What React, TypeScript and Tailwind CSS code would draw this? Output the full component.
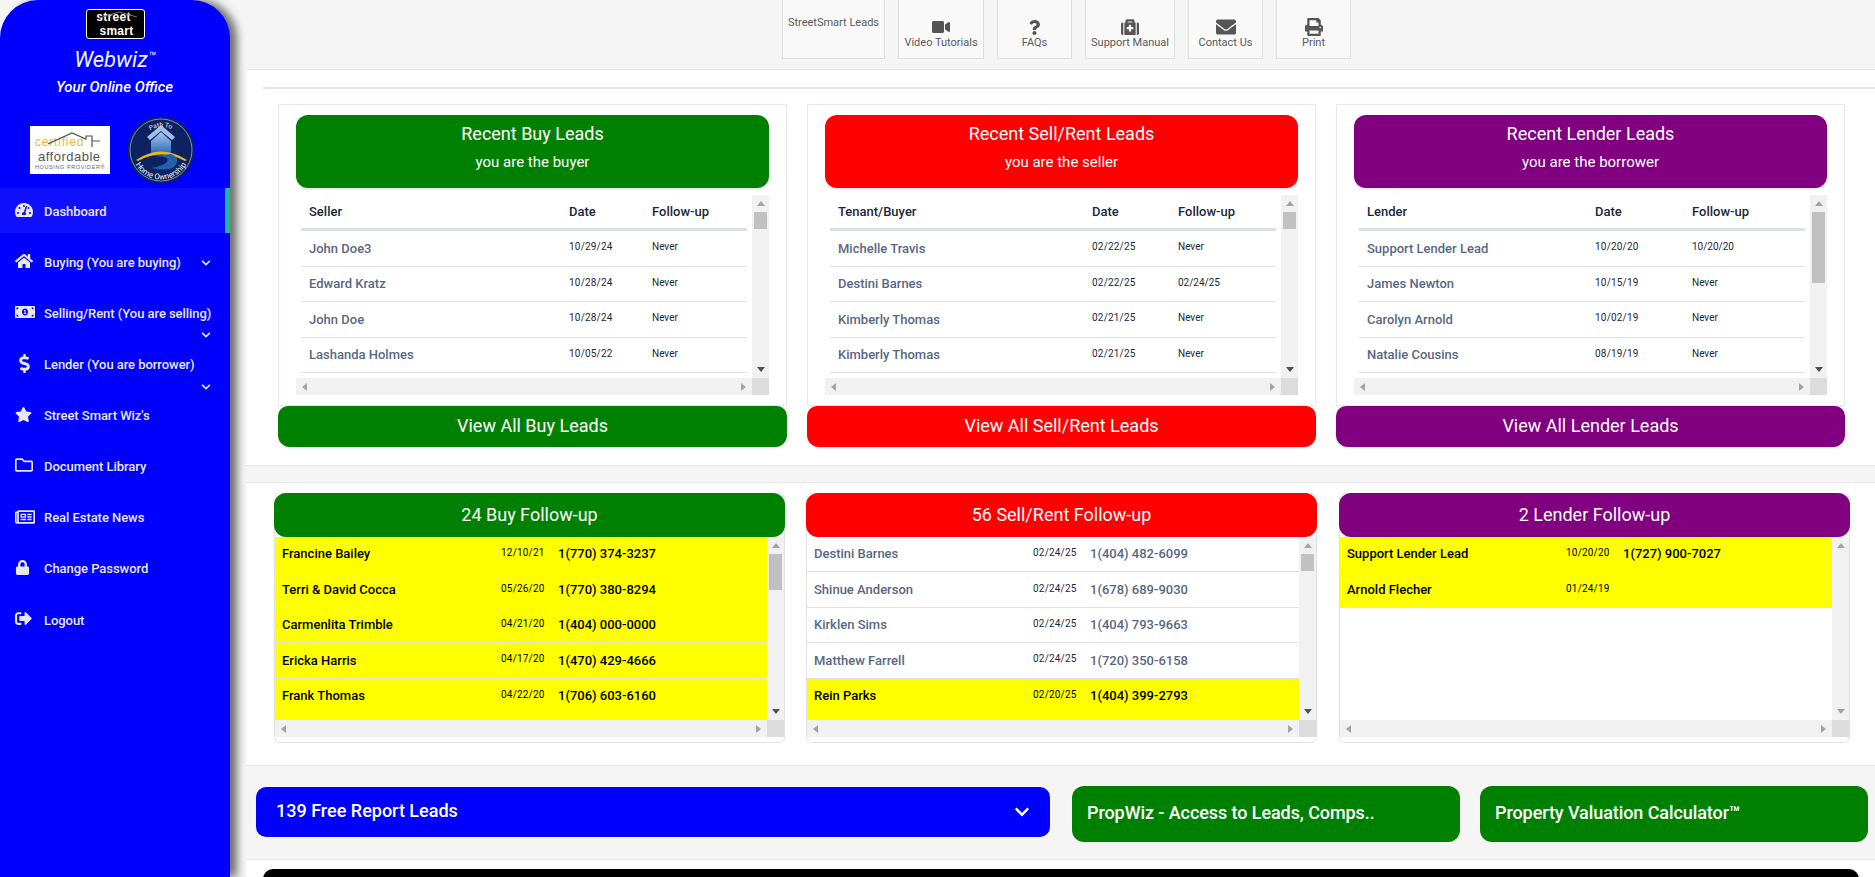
import React from "react";
import {
  FaChevronDown,
  FaDollarSign,
  FaEnvelope,
  FaHome,
  FaLock,
  FaMedkit,
  FaMoneyBillAlt,
  FaPrint,
  FaQuestion,
  FaRegFolder,
  FaRegNewspaper,
  FaSignOutAlt,
  FaStar,
  FaTachometerAlt,
  FaVideo,
} from "react-icons/fa";

const GREEN = "bg-[#008000]";
const RED = "bg-[#ff0000]";
const PURPLE = "bg-[#800080]";

const navItems = [
  { label: "Dashboard", icon: <FaTachometerAlt size={18} />, active: true },
  { label: "Buying (You are buying)", icon: <FaHome size={18} />, chevron: "top-[19px]" },
  { label: "Selling/Rent (You are selling)", icon: <FaMoneyBillAlt size={20} />, chevron: "top-[40px]" },
  { label: "Lender (You are borrower)", icon: <FaDollarSign size={19} />, chevron: "top-[41px]" },
  { label: "Street Smart Wiz's", icon: <FaStar size={17} /> },
  { label: "Document Library", icon: <FaRegFolder size={18} /> },
  { label: "Real Estate News", icon: <FaRegNewspaper size={20} /> },
  { label: "Change Password", icon: <FaLock size={15} /> },
  { label: "Logout", icon: <FaSignOutAlt size={17} /> },
];

const topButtons = [
  { label: "Video Tutorials", icon: <FaVideo size={18} />, w: "w-[86px]" },
  { label: "FAQs", icon: <FaQuestion size={15} />, w: "w-[75px]" },
  { label: "Support Manual", icon: <FaMedkit size={18} />, w: "w-[90px]" },
  { label: "Contact Us", icon: <FaEnvelope size={20} />, w: "w-[75px]" },
  { label: "Print", icon: <FaPrint size={18} />, w: "w-[75px]" },
];

const recentCards = [
  {
    color: GREEN,
    title: "Recent Buy Leads",
    sub: "you are the buyer",
    head: "Seller",
    button: "View All Buy Leads",
    nameCol: "w-[260px]",
    dateCol: "w-[83px]",
    thumb: "h-[17px]",
    rows: [
      ["John Doe3", "10/29/24", "Never"],
      ["Edward Kratz", "10/28/24", "Never"],
      ["John Doe", "10/28/24", "Never"],
      ["Lashanda Holmes", "10/05/22", "Never"],
    ],
  },
  {
    color: RED,
    title: "Recent Sell/Rent Leads",
    sub: "you are the seller",
    head: "Tenant/Buyer",
    button: "View All Sell/Rent Leads",
    nameCol: "w-[254px]",
    dateCol: "w-[86px]",
    thumb: "h-[17px]",
    rows: [
      ["Michelle Travis", "02/22/25", "Never"],
      ["Destini Barnes", "02/22/25", "02/24/25"],
      ["Kimberly Thomas", "02/21/25", "Never"],
      ["Kimberly Thomas", "02/21/25", "Never"],
    ],
  },
  {
    color: PURPLE,
    title: "Recent Lender Leads",
    sub: "you are the borrower",
    head: "Lender",
    button: "View All Lender Leads",
    nameCol: "w-[228px]",
    dateCol: "w-[97px]",
    thumb: "h-[71px]",
    rows: [
      ["Support Lender Lead", "10/20/20", "10/20/20"],
      ["James Newton", "10/15/19", "Never"],
      ["Carolyn Arnold", "10/02/19", "Never"],
      ["Natalie Cousins", "08/19/19", "Never"],
    ],
  },
];

const followUps = [
  {
    color: GREEN,
    title: "24 Buy Follow-up",
    thumb: "h-[36px]",
    filler: true,
    offset: "",
    rows: [
      { name: "Francine Bailey", date: "12/10/21", phone: "1(770) 374-3237", hot: true },
      { name: "Terri & David Cocca", date: "05/26/20", phone: "1(770) 380-8294", hot: true },
      { name: "Carmenlita Trimble", date: "04/21/20", phone: "1(404) 000-0000", hot: true },
      { name: "Ericka Harris", date: "04/17/20", phone: "1(470) 429-4666", hot: true },
      { name: "Frank Thomas", date: "04/22/20", phone: "1(706) 603-6160", hot: true },
    ],
  },
  {
    color: RED,
    title: "56 Sell/Rent Follow-up",
    thumb: "h-[17px]",
    filler: true,
    offset: "",
    rows: [
      { name: "Destini Barnes", date: "02/24/25", phone: "1(404) 482-6099" },
      { name: "Shinue Anderson", date: "02/24/25", phone: "1(678) 689-9030" },
      { name: "Kirklen Sims", date: "02/24/25", phone: "1(404) 793-9663" },
      { name: "Matthew Farrell", date: "02/24/25", phone: "1(720) 350-6158" },
      { name: "Rein Parks", date: "02/20/25", phone: "1(404) 399-2793", hot: true },
    ],
  },
  {
    color: PURPLE,
    title: "2 Lender Follow-up",
    thumb: "",
    filler: false,
    offset: "ml-[1px]",
    rows: [
      { name: "Support Lender Lead", date: "10/20/20", phone: "1(727) 900-7027", hot: true },
      { name: "Arnold Flecher", date: "01/24/19", phone: "", hot: true },
    ],
  },
];

// little triangle used on the scrollbar buttons
const Arrow = ({ dir, light }: { dir: "up" | "down" | "left" | "right"; light?: boolean }) => {
  const points = {
    up: "0,6 4,1 8,6",
    down: "0,1 8,1 4,6",
    left: "6,0 6,8 1,4",
    right: "2,0 2,8 7,4",
  };
  return (
    <svg width="8" height="8" viewBox="0 0 8 8" className={light ? "fill-[#a3a3a3]" : dir === "down" ? "fill-[#505050]" : "fill-[#a3a3a3]"}>
      <polygon points={points[dir]} />
    </svg>
  );
};

const VScroll = ({ thumb }: { thumb: string }) => (
  <div className="flex w-[17px] shrink-0 flex-col items-center bg-[#f1f1f1]">
    <div className="flex h-[17px] w-full items-center justify-center">
      <Arrow dir="up" />
    </div>
    <div className="w-full flex-1 px-[2px]">
      {thumb && <div className={`w-full bg-[#c1c1c1] ${thumb}`} />}
    </div>
    <div className="flex h-[17px] w-full items-center justify-center">
      <Arrow dir="down" light={!thumb} />
    </div>
  </div>
);

const HScroll = () => (
  <div className="flex h-[17px] shrink-0">
    <div className="flex flex-1 items-center justify-between bg-[#f1f1f1] px-[5px]">
      <Arrow dir="left" />
      <Arrow dir="right" />
    </div>
    <div className="w-[17px] bg-[#dcdcdc]" />
  </div>
);

const StreetSmartLogo = () => (
  <div className="relative flex h-[30px] w-[59px] flex-col items-center justify-end rounded-[3px] border border-white bg-black [font-family:'Liberation_Sans',sans-serif] text-[12px] leading-[14px] font-bold tracking-[0.3px] text-white">
    <svg width="40" height="8" viewBox="0 0 40 8" className="absolute top-[1px] left-[12px] fill-none stroke-[#777]">
      <path d="M0 7 L20 1 L38 6" />
    </svg>
    <span className="ml-[-3px]">street</span>
    <span className="ml-[3px]">smart</span>
  </div>
);

const CertifiedLogo = () => (
  <div className="relative flex h-[48px] w-[80px] shrink-0 flex-col justify-end bg-white pb-[3px] pl-[5px] [font-family:'Liberation_Sans',sans-serif]">
    <svg width="54" height="18" viewBox="0 0 54 16" className="absolute top-[5px] left-[18px] fill-none stroke-[#555] stroke-[1.2]">
      <path d="M0 12 L24 1 L38 7 L38 4 L44 4 L44 9 L52 9 M44 9 L44 15" />
    </svg>
    <span className="text-[12px] leading-[14px] tracking-[0.8px] text-[#e9b93a]">certified</span>
    <span className="ml-[3px] text-[13px] leading-[15px] tracking-[0.5px] text-[#555]">affordable</span>
    <span className="text-[5.5px] leading-[7px] tracking-[0.6px] whitespace-nowrap text-[#666]">HOUSING PROVIDER®</span>
  </div>
);

const PathLogo = () => (
  <svg width="68" height="68" viewBox="0 0 68 68" className="shrink-0">
    <defs>
      <path id="arcTop" d="M18 19 A22 22 0 0 1 52 19" />
      <path id="arcBottom" d="M6 42 A29 29 0 0 0 62 42" />
      <linearGradient id="houseFill" x1="0" y1="0" x2="0" y2="1">
        <stop offset="0" stopColor="#a9c8ee" />
        <stop offset="1" stopColor="#2f6db8" />
      </linearGradient>
    </defs>
    <circle cx="34" cy="34" r="33.5" fill="#0d2260" />
    <circle cx="34" cy="34" r="31" fill="none" stroke="#c9d4ea" strokeWidth="0.6" />
    <path d="M20 21 L34 9 L48 21 L45 24 L34 15 L23 24 Z" fill="#9fc0ea" />
    <path d="M24 25 L34 16 L44 25 V37 H24 Z" fill="url(#houseFill)" />
    <path d="M9 44 Q34 27 60 44 L58 45 Q34 32 11 45 Z" fill="#e8b820" />
    <path d="M26 40 Q44 40 40 46 Q36 50 24 52 Q42 56 48 50 Q54 42 44 38 Z" fill="#2560ac" />
    <text fontSize="6.5" fill="#e6ecf8" fontFamily="Roboto, sans-serif">
      <textPath href="#arcTop" startOffset="7">Path To</textPath>
    </text>
    <text fontSize="8" fill="#e6ecf8" fontFamily="Roboto, sans-serif">
      <textPath href="#arcBottom" startOffset="7">Home Ownership</textPath>
    </text>
  </svg>
);

const Sidebar = () => (
  <aside className="z-10 flex h-full w-[230px] shrink-0 flex-col rounded-t-[38px] bg-[#0000ff] shadow-[7px_0_8px_rgba(0,0,0,0.55)]">
    <div className="flex justify-center pt-[9px]">
      <StreetSmartLogo />
    </div>
    <div className="mt-[7px] text-center text-[22px] leading-[28px] font-normal text-[#f0f0ff] italic">
      Webwiz<sup className="text-[13px]">™</sup>
    </div>
    <div className="mt-[3px] pr-[1px] text-center text-[15px] leading-[20px] font-medium text-white italic">Your Online Office</div>
    <div className="mt-[18px] flex h-[70px] items-center gap-[17px] pl-[30px]">
      <CertifiedLogo />
      <PathLogo />
    </div>
    <nav className="mt-[3px] flex flex-col gap-[6.1px]">
      {navItems.map((item) => (
        <div
          key={item.label}
          className={`relative flex h-[45px] items-center pt-[2px] pl-[15px] text-[13px] font-medium text-[#e7e7e7] ${
            item.active ? "border-r-[5px] border-[#1abb9c] bg-[#1010ff]" : ""
          }`}
        >
          <span className="-mt-[3px] flex w-[29px] shrink-0 items-center">{item.icon}</span>
          <span className="tracking-[-0.05px] whitespace-nowrap">{item.label}</span>
          {item.chevron && <FaChevronDown size={10} className={`absolute left-[201px] ${item.chevron}`} />}
        </div>
      ))}
    </nav>
  </aside>
);

const TopBar = () => (
  <div className="flex h-[70px] shrink-0 gap-[13px] border-b border-[#e6e6e6] pl-[536px] text-[11px] text-[#5a5a5a]">
    <div className="flex h-[59px] w-[103px] justify-center border border-t-0 border-[#dedede] bg-[#f9f9f9] pt-[15px]">StreetSmart Leads</div>
    {topButtons.map((b) => (
      <div
        key={b.label}
        className={`flex h-[59px] flex-col items-center border border-t-0 border-[#dedede] bg-[#f9f9f9] pt-[17px] ${b.w}`}
      >
        <span className="flex h-[20px] items-center text-[#555]">{b.icon}</span>
        <span className="mt-[-2px] leading-[16px] whitespace-nowrap">{b.label}</span>
      </div>
    ))}
  </div>
);

const RecentCard = ({ card }: { card: (typeof recentCards)[number] }) => (
  <div className="flex w-[509px] flex-col">
    <div className="h-[302px] border border-[#e6e9ef] bg-white px-[17px] pt-[10px]">
      <div className={`h-[73px] rounded-[12px] pt-[7px] text-center text-white shadow-[0_2px_2px_rgba(0,0,0,0.08)] ${card.color}`}>
        <div className="text-[18px] leading-[24px]">{card.title}</div>
        <div className="mt-[6px] text-[15px] leading-[20px]">{card.sub}</div>
      </div>
      <div className="mt-[7px] flex h-[200px] flex-col">
        <div className="flex h-[183px]">
          <div className="flex-1 overflow-hidden pr-[5px] pl-[5px]">
            <div className="flex h-[36px] items-center border-b-[3px] border-[#dcdfe3] pt-[1px] pl-[8px] text-[13px] font-medium text-[#1c273c]">
              <span className={`shrink-0 ${card.nameCol}`}>{card.head}</span>
              <span className={`shrink-0 ${card.dateCol}`}>Date</span>
              <span>Follow-up</span>
            </div>
            {card.rows.map((r, i) => (
              <div key={i} className="flex h-[35.5px] items-center border-b border-[#dee2e6] pl-[8px]">
                <span className={`shrink-0 text-[13px] font-medium text-[#596882] ${card.nameCol}`}>{r[0]}</span>
                <span className={`mb-[3px] shrink-0 text-[10px] tracking-[0.2px] text-[#1c273c] ${card.dateCol}`}>{r[1]}</span>
                <span className="mb-[3px] text-[10px] text-[#1c273c]">{r[2]}</span>
              </div>
            ))}
          </div>
          <VScroll thumb={card.thumb} />
        </div>
        <HScroll />
      </div>
    </div>
    <div className={`flex h-[41px] items-center justify-center rounded-b-[12px] rounded-t-[10px] pb-[2px] text-[18px] text-white shadow-[0_1px_2px_rgba(0,0,0,0.1)] ${card.color}`}>
      {card.button}
    </div>
  </div>
);

const FollowCard = ({ card }: { card: (typeof followUps)[number] }) => (
  <div className={`flex h-[250px] w-[511px] shrink-0 flex-col rounded-[6px] border border-[#e2e2e2] bg-white ${card.offset}`}>
    <div className={`-mx-px -mt-px flex h-[44px] shrink-0 items-center justify-center rounded-[12px] pb-[1px] text-[18px] text-white ${card.color}`}>{card.title}</div>
    <div className="flex h-[183px] shrink-0">
      <div className="flex-1 overflow-hidden">
        {card.rows.map((r) => (
          <div
            key={r.name}
            className={`flex h-[35.4px] items-center border-b border-[#dee2e6] pl-[7px] font-medium ${
              r.hot ? "bg-[#ffff00] text-black" : "text-[#596882]"
            }`}
          >
            <span className="w-[219px] shrink-0 text-[13px]">{r.name}</span>
            <span className={`mb-[3px] w-[57px] shrink-0 text-[10px] font-normal tracking-[0.2px] ${r.hot ? "text-black" : "text-[#1c273c]"}`}>{r.date}</span>
            <span className="text-[13px]">{r.phone}</span>
          </div>
        ))}
        {card.filler && <div className="h-[20px] bg-[#ffff00]" />}
      </div>
      <VScroll thumb={card.thumb} />
    </div>
    <HScroll />
  </div>
);

export default function App() {
  return (
    <div className="flex h-[877px] overflow-hidden bg-[#f5f5f5] [font-family:Roboto,sans-serif]">
      <Sidebar />
      <main className="flex min-w-0 flex-1 flex-col pl-[16px]">
        <TopBar />

        <section className="h-[396px] shrink-0 border-b border-[#e9e9e9] bg-white pt-[17px]">
          <div className="ml-[17px] h-[2px] bg-[#e3e7ed]" />
          <div className="mt-[15px] flex gap-[20px] pl-[32px]">
            {recentCards.map((c) => (
              <RecentCard key={c.title} card={c} />
            ))}
          </div>
        </section>

        <div className="h-[16px] shrink-0" />

        <section className="flex h-[284px] shrink-0 gap-[21px] border-y border-[#e9e9e9] bg-white pt-[10px] pl-[28px]">
          {followUps.map((c) => (
            <FollowCard key={c.title} card={c} />
          ))}
        </section>

        <section className="flex h-[93px] shrink-0 items-start pt-[20px] pl-[10px] text-[18px] font-medium text-white">
          <div className="mt-[1px] flex h-[50px] w-[794px] items-center justify-between rounded-[10px] bg-[#0000ff] pr-[20px] pl-[20px] shadow-[0_0_2px_rgba(255,255,255,0.9)]">
            <span className="-mt-[4px]">139 Free Report Leads</span>
            <FaChevronDown size={16} />
          </div>
          <div className="ml-[22px] flex h-[56px] w-[388px] items-center rounded-[12px] bg-[#008000] pb-[3px] pl-[15px] tracking-[-0.08px]">PropWiz - Access to Leads, Comps..</div>
          <div className="ml-[20px] flex h-[56px] w-[388px] items-center rounded-[12px] bg-[#008000] pb-[3px] pl-[15px] tracking-[-0.08px]">
            Property Valuation Calculator™
          </div>
        </section>

        <section className="flex-1 border-t border-[#e6e6ee] bg-white pt-[9px] pl-[17px]">
          <div className="h-[60px] w-[1596px] rounded-[10px] bg-black" />
        </section>
      </main>
    </div>
  );
}
